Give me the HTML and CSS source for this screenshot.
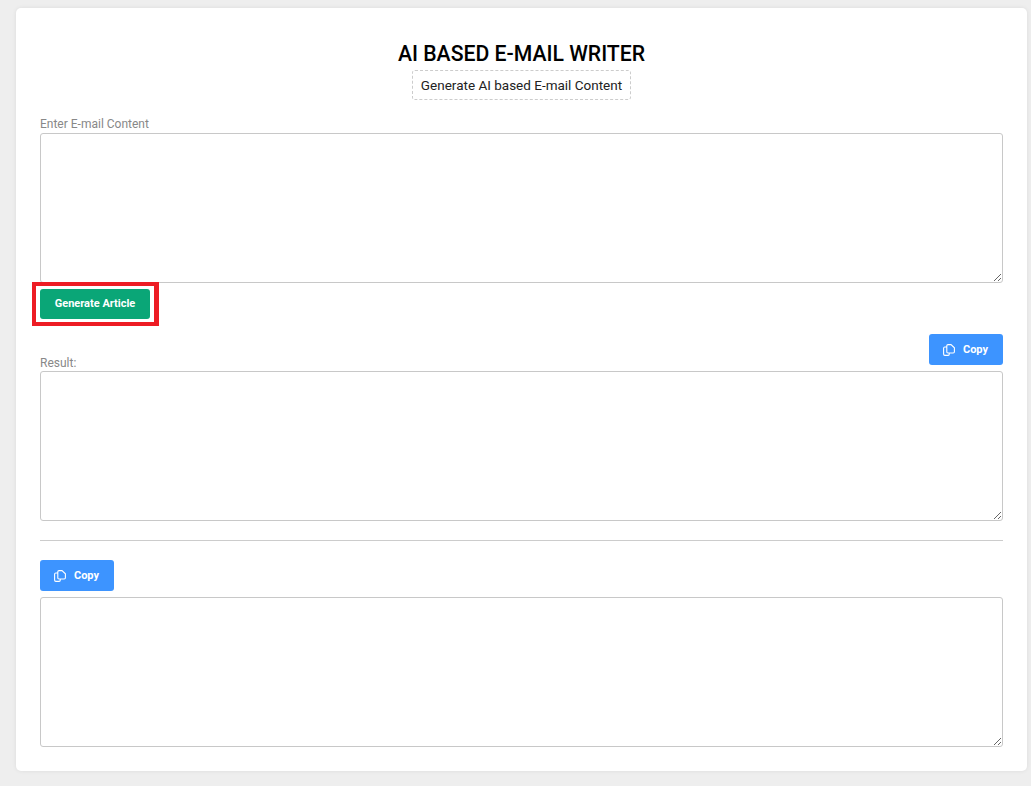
FILE: index.html
```html
<!DOCTYPE html>
<html lang="en">
<head>
    <meta charset="UTF-8">
    <title>AI Based E-mail Writer</title>
    <link rel="stylesheet" href="styles.css">
</head>
<body>
    <div class="card">
        <div class="header">
            <h1>AI BASED E-MAIL WRITER</h1>
            <p class="subtitle">Generate AI based E-mail Content</p>
        </div>

        <label class="field-label" for="content">Enter E-mail Content</label>
        <textarea id="content"></textarea>
        <button type="button" class="btn btn-generate">Generate Article</button>

        <div class="result-head">
            <label class="field-label" for="result">Result:</label>
            <button type="button" class="btn btn-copy">
                <svg class="copy-icon" viewBox="0 0 12 12" aria-hidden="true">
                    <path d="M4 3H1.800C1.100 3 .6 3.500 .6 4.200v5.900c0 .7.5 1.300 1.200 1.300h3.300c.7 0 1.200-.6 1.200-1.300V9"/>
                    <path d="M5 .6h3l3.400 3.200v4c0 .7-.5 1.200-1.200 1.200H5c-.7 0-1.200-.5-1.200-1.200V1.800C3.800 1.100 4.300.6 5 .6z"/>
                </svg>
                Copy
            </button>
        </div>
        <textarea id="result"></textarea>

        <hr class="divider">

        <button type="button" class="btn btn-copy">
            <svg class="copy-icon" viewBox="0 0 12 12" aria-hidden="true">
                <path d="M4 3H1.800C1.100 3 .6 3.500 .6 4.200v5.900c0 .7.5 1.300 1.200 1.300h3.300c.7 0 1.200-.6 1.200-1.300V9"/>
                <path d="M5 .6h3l3.400 3.200v4c0 .7-.5 1.200-1.200 1.200H5c-.7 0-1.200-.5-1.200-1.200V1.800C3.800 1.100 4.300.6 5 .6z"/>
            </svg>
            Copy
        </button>
        <textarea id="copy-text" class="last-area"></textarea>
    </div>
</body>
</html>
```

FILE: styles.css
```css
* {
    box-sizing: border-box;
}

html, body {
    height: 100%;
}

body {
    margin: 0;
    padding: 8px 4px 15px 16px;
    background: #eeeeee;
    font-family: Roboto, sans-serif;
    color: #000;
    overflow: hidden;
}

.card {
    background: #fff;
    border-radius: 5px;
    box-shadow: 0 0 4px rgba(0, 0, 0, 0.08);
    padding: 34px 24px 24px;
}

.header {
    display: flex;
    flex-direction: column;
    align-items: center;
}

h1 {
    margin: 0 0 5px;
    font-size: 21.2px;
    line-height: 23px;
    font-weight: 500;
    color: #000;
}

.subtitle {
    margin: 0;
    height: 30px;
    padding: 0 8px;
    border: 1px dashed #cccccc;
    border-radius: 3px;
    font-size: 13.5px;
    line-height: 28px;
    color: #222;
}

.field-label {
    display: block;
    font-size: 12px;
    line-height: 14px;
    color: #888888;
}

.header + .field-label {
    margin-top: 17px;
    margin-bottom: 2px;
}

textarea {
    display: block;
    width: 100%;
    height: 150px;
    border: 1px solid #c8c8c8;
    border-radius: 3px;
    background: #fff;
    outline: none;
}

.btn {
    display: flex;
    align-items: center;
    justify-content: center;
    padding: 0;
    border: none;
    border-radius: 3px;
    color: #fff;
    font-family: Roboto, sans-serif;
    font-size: 11px;
    font-weight: 700;
    cursor: pointer;
}

.btn-generate {
    position: relative;
    width: 110px;
    height: 30px;
    margin-top: 6px;
    padding-bottom: 1px;
    background: #0aa677;
}

/* red marker drawn around the button */
.btn-generate::after {
    content: "";
    position: absolute;
    top: -7px;
    right: -9px;
    bottom: -7px;
    left: -8px;
    border: 4px solid #ed1c24;
    border-right-width: 5px;
}

.btn-copy {
    width: 74px;
    height: 31px;
    gap: 8px;
    padding-right: 1px;
    background: #3d94ff;
}

.copy-icon {
    width: 12px;
    height: 12px;
    fill: none;
    stroke: #fff;
    stroke-width: 1.1;
}

.result-head {
    display: flex;
    justify-content: space-between;
    align-items: flex-end;
    margin-top: 15px;
    margin-bottom: 6px;
}

.result-head .field-label {
    margin-bottom: -5px;
}

.divider {
    margin: 19px 0;
    border: none;
    border-top: 1px solid #cccccc;
}

.last-area {
    margin-top: 6px;
}
```
